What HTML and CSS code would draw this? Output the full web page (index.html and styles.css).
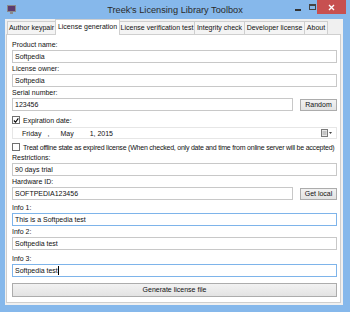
FILE: index.html
```html
<!DOCTYPE html>
<html lang="en">
<head>
    <meta charset="UTF-8">
    <title>Treek's Licensing Library Toolbox</title>
    <link rel="stylesheet" href="styles.css">
</head>
<body>
    <div class="window">
        <div class="titlebar">
            <div class="app-icon">
                <svg width="9" height="9" viewBox="0 0 9 9">
                    <rect x="0" y="0" width="9" height="7" fill="#8a8a8a"/>
                    <rect x="1" y="1" width="7" height="5" fill="#5c3a6e"/>
                    <rect x="3" y="7" width="3" height="2" fill="#8a8a8a"/>
                </svg>
            </div>
            <div class="title">Treek's Licensing Library Toolbox</div>
            <div class="controls">
                <span class="ctl-min"></span>
                <span class="ctl-max"></span>
                <span class="ctl-close">
                    <svg width="7" height="7" viewBox="0 0 7 7">
                        <path d="M1 1 L6 6 M6 1 L1 6" stroke="#fff" stroke-width="1.4"/>
                    </svg>
                </span>
            </div>
        </div>

        <div class="client">
            <div class="tabs">
                <div class="tab tab-author">Author keypair</div>
                <div class="tab tab-gen active">License generation</div>
                <div class="tab tab-verify">License verification test</div>
                <div class="tab tab-integrity">Integrity check</div>
                <div class="tab tab-dev">Developer license</div>
                <div class="tab tab-about">About</div>
            </div>

            <div class="panel">
                <div class="label first">Product name:</div>
                <div class="textbox">Softpedia</div>

                <div class="label">License owner:</div>
                <div class="textbox">Softpedia</div>

                <div class="label">Serial number:</div>
                <div class="row">
                    <div class="textbox">123456</div>
                    <div class="button small">Random</div>
                </div>

                <div class="check-row expiry">
                    <span class="checkbox">
                        <svg width="7" height="7" viewBox="0 0 7 7">
                            <path d="M1 3.5 L3 5.5 L6.2 1" fill="none" stroke="#000" stroke-width="1.3"/>
                        </svg>
                    </span>
                    <span>Expiration date:</span>
                </div>
                <div class="datepicker">
                    <span class="dp-day">Friday</span>
                    <span class="dp-comma">,</span>
                    <span class="dp-month">May</span>
                    <span class="dp-rest">1, 2015</span>
                    <span class="dp-icon">
                        <svg width="11" height="8" viewBox="0 0 11 8">
                            <rect x="0.5" y="0.5" width="6" height="7" fill="#e8e8e8" stroke="#7a7a7a"/>
                            <path d="M1.5 3 H5.5 M1.5 5 H5.5" stroke="#a0a0a0"/>
                            <path d="M8 3 L11 3 L9.5 5 Z" fill="#444"/>
                        </svg>
                    </span>
                </div>

                <div class="check-row offline">
                    <span class="checkbox"></span>
                    <span>Treat offline state as expired license (When checked, only date and time from online server will be accepted)</span>
                </div>

                <div class="label">Restrictions:</div>
                <div class="textbox">90 days trial</div>

                <div class="label">Hardware ID:</div>
                <div class="row">
                    <div class="textbox">SOFTPEDIA123456</div>
                    <div class="button small">Get local</div>
                </div>

                <div class="label info1">Info 1:</div>
                <div class="textbox hot">This is a Softpedia test</div>

                <div class="label">Info 2:</div>
                <div class="textbox">Softpedia test</div>

                <div class="label info3">Info 3:</div>
                <div class="textbox hot">Softpedia test<span class="caret"></span></div>

                <div class="button wide">Generate license file</div>
            </div>
        </div>
    </div>
</body>
</html>
```

FILE: styles.css
```css
* {
    box-sizing: border-box;
}
body {
    margin: 0;
    font-family: "Liberation Sans", Arial, sans-serif;
    font-size: 7px;
    color: #111;
}
.window {
    width: 350px;
    height: 312px;
    background: #86b8eb;
    display: flex;
    flex-direction: column;
}
.titlebar {
    height: 19px;
    display: grid;
    grid-template-columns: 1fr auto 1fr;
    align-items: center;
}
.app-icon {
    padding-left: 7px;
    display: flex;
}
.title {
    font-size: 9.2px;
    color: #2a2a2a;
}
.controls {
    display: flex;
    justify-content: flex-end;
    align-self: start;
    padding-right: 4px;
}
.ctl-min {
    width: 6px;
    height: 2px;
    background: #333;
    margin: 9px 8px 0 0;
}
.ctl-max {
    width: 7px;
    height: 6px;
    border: 1px solid #444;
    border-top-width: 2px;
    margin: 4px 1px 0 0;
}
.ctl-close {
    width: 29px;
    height: 14px;
    background: #c75050;
    display: flex;
    align-items: center;
    justify-content: center;
}
.client {
    flex: 1;
    background: #f0f0f0;
    margin: 0 7px 7px 5px;
    display: flex;
    flex-direction: column;
}
.tabs {
    display: flex;
    height: 15px;
    padding-left: 2px;
    align-items: flex-end;
}
.tab {
    height: 13px;
    line-height: 12px;
    text-align: center;
    background: #f4f4f4;
    border: 1px solid #cfcfcf;
    border-bottom: none;
    margin-right: -1px;
    white-space: nowrap;
}
.tab.active {
    height: 16px;
    line-height: 13px;
    background: #fff;
    position: relative;
    z-index: 1;
    margin-bottom: -1px;
}
.tab-author { width: 49px; }
.tab-gen { width: 65px; }
.tab-verify { width: 76px; }
.tab-integrity { width: 51px; }
.tab-dev { width: 61px; }
.tab-about { width: 24px; }
.panel {
    flex: 1;
    background: #fff;
    border: 1px solid #cfcfcf;
    margin: 0 2px 2px 1px;
    padding: 5px 3px 0 5px;
    display: flex;
    flex-direction: column;
}
.label {
    height: 10px;
    line-height: 10px;
    margin-top: 1px;
}
.label.first {
    margin-top: 0;
}
.label.info1 {
    margin-top: 3px;
}
.label.info3 {
    margin-top: 4px;
}
.textbox {
    height: 13px;
    line-height: 11px;
    border: 1px solid #c8c8c8;
    padding-left: 2px;
    white-space: nowrap;
}
.textbox.hot {
    border-color: #7eb4ea;
}
.caret {
    display: inline-block;
    width: 1px;
    height: 9px;
    background: #000;
    vertical-align: -2px;
}
.row {
    display: flex;
    gap: 7px;
    align-items: center;
}
.row .textbox {
    flex: 1;
}
.button {
    background: linear-gradient(#f2f2f2, #e3e3e3);
    border: 1px solid #acacac;
    text-align: center;
    color: #111;
}
.button.small {
    width: 37px;
    height: 12px;
    line-height: 10px;
}
.button.wide {
    height: 14px;
    line-height: 12px;
    margin-top: 6px;
}
.check-row {
    display: flex;
    align-items: center;
    gap: 3px;
    height: 10px;
    white-space: nowrap;
}
.check-row.expiry {
    margin-top: 4px;
}
.check-row.offline {
    margin-top: 3px;
    letter-spacing: -0.22px;
}
.checkbox {
    flex-shrink: 0;
    width: 8px;
    height: 8px;
    border: 1px solid #707070;
    background: #fff;
    display: flex;
    align-items: center;
    justify-content: center;
}
.datepicker {
    height: 12px;
    margin-top: 2px;
    border: 1px solid #e6e6e6;
    display: flex;
    align-items: center;
}
.dp-day { margin-left: 9px; }
.dp-comma { margin-left: 6px; }
.dp-month { margin-left: 11px; }
.dp-rest { margin-left: 16px; }
.dp-icon {
    margin-left: auto;
    margin-right: 4px;
    display: flex;
}
```
